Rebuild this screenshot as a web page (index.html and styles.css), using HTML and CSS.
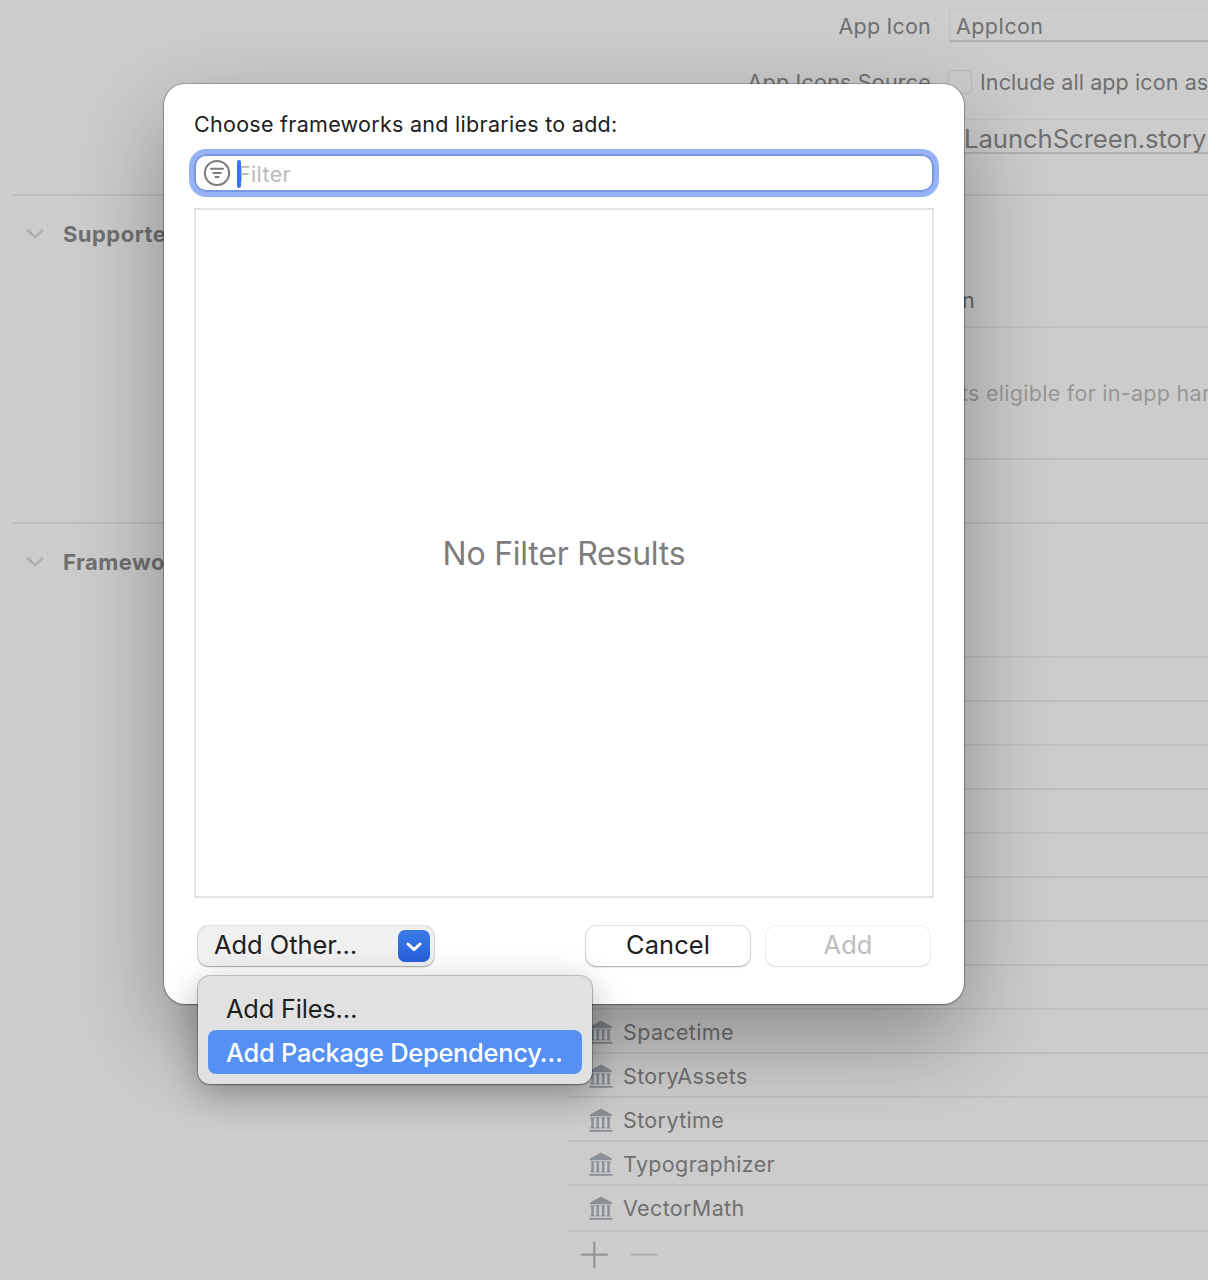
FILE: index.html
```html
<!DOCTYPE html>
<html lang="en">
<head>
<meta charset="utf-8">
<title>Choose frameworks and libraries</title>
<link rel="stylesheet" href="styles.css">
</head>
<body>
<svg class="sprite" width="0" height="0">
  <symbol id="library" viewBox="0 0 24 24">
    <path d="M12 .6 22.800 6.600 V8.200 H1 V6.600Z"/>
    <path d="M1.500 9.200H5.500V10.400H4.700V19.300H5.500V20.500H1.500V19.300H2.300V10.400H1.500ZM6.700 9.200H10.700V10.400H9.900V19.300H10.700V20.500H6.700V19.300H7.500V10.400H6.700ZM12.200 9.200H16.200V10.400H15.400V19.300H16.200V20.500H12.200V19.300H13V10.400H12.200ZM17.500 9.200H21.500V10.400H20.700V19.300H21.500V20.500H17.500V19.300H18.300V10.400H17.500Z"/>
    <path d="M.5 21.900H23.300V23.800H.5Z"/>
  </symbol>
  <symbol id="chevron" viewBox="0 0 18 10">
    <path d="M2 1.500 9 8.300 16 1.500" fill="none" stroke="currentColor" stroke-width="2.900" stroke-linecap="round" stroke-linejoin="round"/>
  </symbol>
</svg>

<main class="editor">
  <section class="icons-section">
    <div class="field-row">
      <span class="label">App Icon</span>
      <span class="combo">AppIcon</span>
    </div>
    <div class="field-row">
      <span class="label">App Icons Source</span>
      <span class="check"><i class="checkbox"></i>Include all app icon as</span>
    </div>
    <div class="field-row launch-row">
      <span class="label"></span>
      <span class="combo combo-large"><span class="combo-text">LaunchScreen.story</span></span>
    </div>
  </section>

  <section class="section intents">
    <h2 class="heading"><svg class="disclosure"><use href="#chevron"/></svg>Supporte</h2>
    <div class="body">
      <div class="cell cell-first"><span class="partial">n</span></div>
      <div class="cell"><span class="hint">ts eligible for in-app har</span></div>
      <div class="cell"></div>
    </div>
  </section>

  <section class="section frameworks">
    <h2 class="heading"><svg class="disclosure"><use href="#chevron"/></svg>Framewo</h2>
    <div class="body">
      <ul class="list">
        <li></li><li></li><li></li><li></li><li></li><li></li><li></li><li></li>
        <li><svg class="lib"><use href="#library"/></svg>Spacetime</li>
        <li><svg class="lib"><use href="#library"/></svg>StoryAssets</li>
        <li><svg class="lib"><use href="#library"/></svg>Storytime</li>
        <li><svg class="lib"><use href="#library"/></svg>Typographizer</li>
        <li><svg class="lib"><use href="#library"/></svg>VectorMath</li>
      </ul>
      <div class="list-actions">
        <svg class="plus" viewBox="0 0 28 28"><path d="M14.300 1.500V26.500M1.800 13.700H26.800"/></svg>
        <svg class="minus" viewBox="0 0 28 28"><path d="M1.800 13.700H26.500"/></svg>
      </div>
    </div>
  </section>
</main>

<div class="dialog">
  <p class="title">Choose frameworks and libraries to add:</p>
  <div class="search">
    <svg class="filter-icon" viewBox="0 0 28 28"><circle cx="14" cy="14" r="12.100"/><path d="M8 9.700H20M10.300 14H17.700M12.500 18.100H15.500"/></svg>
    <i class="caret"></i>
    <span class="placeholder">Filter</span>
  </div>
  <div class="results">No Filter Results</div>
  <div class="buttons">
    <div class="button popup">Add Other…<span class="arrow"><svg viewBox="0 0 16 10"><path d="M2 2 8 7.700 14 2"/></svg></span></div>
    <div class="button cancel">Cancel</div>
    <div class="button disabled">Add</div>
  </div>
</div>

<div class="menu">
  <div class="menu-item">Add Files…</div>
  <div class="menu-item selected">Add Package Dependency…</div>
</div>
</body>
</html>
```
FILE: styles.css
```css
* { box-sizing: border-box; }

body {
  margin: 0;
  position: relative;
  width: 1208px;
  height: 1280px;
  overflow: hidden;
  background: #ccc;
  color: #707070;
  font: 21.5px/26px Inter, "Liberation Sans", sans-serif;
  letter-spacing: 0.36px;
  white-space: nowrap;
}

.sprite { position: absolute; }

/* Target editor behind the sheet */
.editor { display: flex; flex-direction: column; height: 1280px; }

.icons-section { height: 194px; padding-top: 9px; }

.field-row {
  display: grid;
  grid-template-columns: 931px 1fr;
  column-gap: 18px;
  align-items: center;
  height: 33px;
  margin-bottom: 24px;
}
.field-row + .field-row { height: 31px; margin-bottom: 22px; }
.label { text-align: right; letter-spacing: 0.2px; }

.combo {
  height: 33px;
  padding: 3px 0 0 6px;
  border: 1px solid #c3c3c3;
  border-right: 0;
  border-bottom: 2px solid #b2b2b2;
}
.combo-large { height: 35px; padding: 0 0 0 14px; }
.combo-text {
  display: block;
  height: 31px;
  font-size: 25.7px;
  line-height: 38px;
  letter-spacing: -0.08px;
}

.check { display: flex; align-items: center; gap: 8px; margin-left: -1px; letter-spacing: 0.1px; }
.checkbox { width: 24px; height: 24px; border: 1.5px solid #b8b8b8; border-radius: 5px; background: #cdcdcd; }

.section {
  display: grid;
  grid-template-columns: 554px 1fr;
  margin-left: 13px;
  border-top: 2px solid #bfbfbf;
}
.intents { height: 328px; }
.frameworks { height: 758px; }

.heading {
  display: flex;
  align-items: center;
  gap: 19px;
  height: 26px;
  margin: 25px 0 0 13px;
  font-size: 22px;
  font-weight: 700;
  letter-spacing: 0.46px;
}
.disclosure { width: 18px; height: 10px; color: #b0b0b0; margin-top: -1px; }

.cell { height: 132px; padding-top: 52px; border-top: 2px solid #bfbfbf; }
.cell-first { height: 130px; padding-top: 91px; border-top: 0; }
.cell:last-child { height: 64px; }
.partial { color: #636363; padding-left: 395px; }
.hint { color: #989898; padding-left: 394px; letter-spacing: 0.28px; }

.list { list-style: none; margin: 132px 0 0; padding: 0; border-bottom: 2px solid #bfbfbf; }
.list li {
  display: flex;
  align-items: center;
  gap: 10px;
  height: 44px;
  padding: 2px 0 0 22px;
  border-top: 2px solid #bfbfbf;
}
.list li:last-child { height: 46px; padding-bottom: 2px; }
.lib { width: 24px; height: 24px; fill: #899097; }

.list-actions { display: flex; gap: 22px; padding: 9px 0 0 13px; }
.plus, .minus { width: 28px; height: 28px; fill: none; stroke: #979797; stroke-width: 2.3; stroke-linecap: round; }
.minus { stroke: #b2b2b2; }

/* Sheet */
.dialog {
  position: absolute;
  left: 164px;
  top: 84px;
  display: flex;
  flex-direction: column;
  width: 800px;
  height: 920px;
  padding: 27px 30px 38px;
  border-radius: 21px;
  background: #fff;
  color: #202020;
  box-shadow: 0 0 0 1px rgba(0, 0, 0, 0.2), 0 1px 2px rgba(0, 0, 0, 0.25), 0 34px 90px rgba(0, 0, 0, 0.32);
}
.title { margin: 0; letter-spacing: 0.28px; }

.search {
  display: flex;
  align-items: center;
  height: 38px;
  margin-top: 17px;
  padding-left: 8px;
  border: 2px solid #7a98e2;
  border-radius: 12px;
  box-shadow: 0 0 0 5px #97b2f8;
}
.filter-icon { width: 28px; height: 28px; margin-left: -1px; fill: none; stroke: #7b7b7b; stroke-width: 2; stroke-linecap: round; }
.caret { position: relative; z-index: 1; width: 4px; height: 28px; margin: 1px 0 0 6px; border-radius: 2px; background: #3478f6; }
.placeholder { margin: 1px 0 0 -3px; color: #bababa; }

.results {
  display: flex;
  align-items: center;
  justify-content: center;
  height: 690px;
  margin-top: 16px;
  padding-top: 2px;
  border: 2px solid #e3e3e3;
  color: #7d7d7d;
  font-size: 32px;
  letter-spacing: -0.24px;
}

.buttons { display: flex; gap: 16px; margin: 28px 4px 0; }
.button {
  display: flex;
  align-items: center;
  justify-content: center;
  width: 164px;
  height: 40px;
  padding-bottom: 2px;
  border-radius: 10px;
  background: #fff;
  box-shadow: 0 0 0 1px rgba(0, 0, 0, 0.1), 0 1px 2px rgba(0, 0, 0, 0.28);
  font-size: 25.4px;
  letter-spacing: 0.1px;
}
.popup {
  justify-content: space-between;
  width: 236px;
  margin-right: auto;
  padding: 0 4px 2px 16px;
  background: #f0f0f0;
  letter-spacing: 0;
}
.arrow {
  display: flex;
  align-items: center;
  justify-content: center;
  width: 32px;
  height: 32px;
  margin-top: 2px;
  border-radius: 7px;
  background: linear-gradient(#3b7be6, #285fdc);
}
.arrow svg { width: 16px; height: 10px; margin-top: 1px; fill: none; stroke: #fff; stroke-width: 3; stroke-linecap: round; stroke-linejoin: round; }
.disabled { color: #bdbdbd; box-shadow: 0 0 0 1px rgba(0, 0, 0, 0.05), 0 1px 2px rgba(0, 0, 0, 0.1); }

/* Pop-up menu */
.menu {
  position: absolute;
  left: 198px;
  top: 976px;
  width: 394px;
  height: 108px;
  padding: 10px;
  border-radius: 12px;
  background: #e1e1e1;
  color: #202020;
  font-size: 25.4px;
  box-shadow: 0 0 0 1px rgba(0, 0, 0, 0.2), 0 1px 2px rgba(0, 0, 0, 0.25), 0 10px 36px rgba(0, 0, 0, 0.3);
}
.menu-item {
  height: 44px;
  padding: 2px 18px 0;
  border-radius: 8px;
  line-height: 42px;
  letter-spacing: -0.2px;
}
.selected { background: #5590f5; color: #fff; font-weight: 500; letter-spacing: -0.25px; }
```
